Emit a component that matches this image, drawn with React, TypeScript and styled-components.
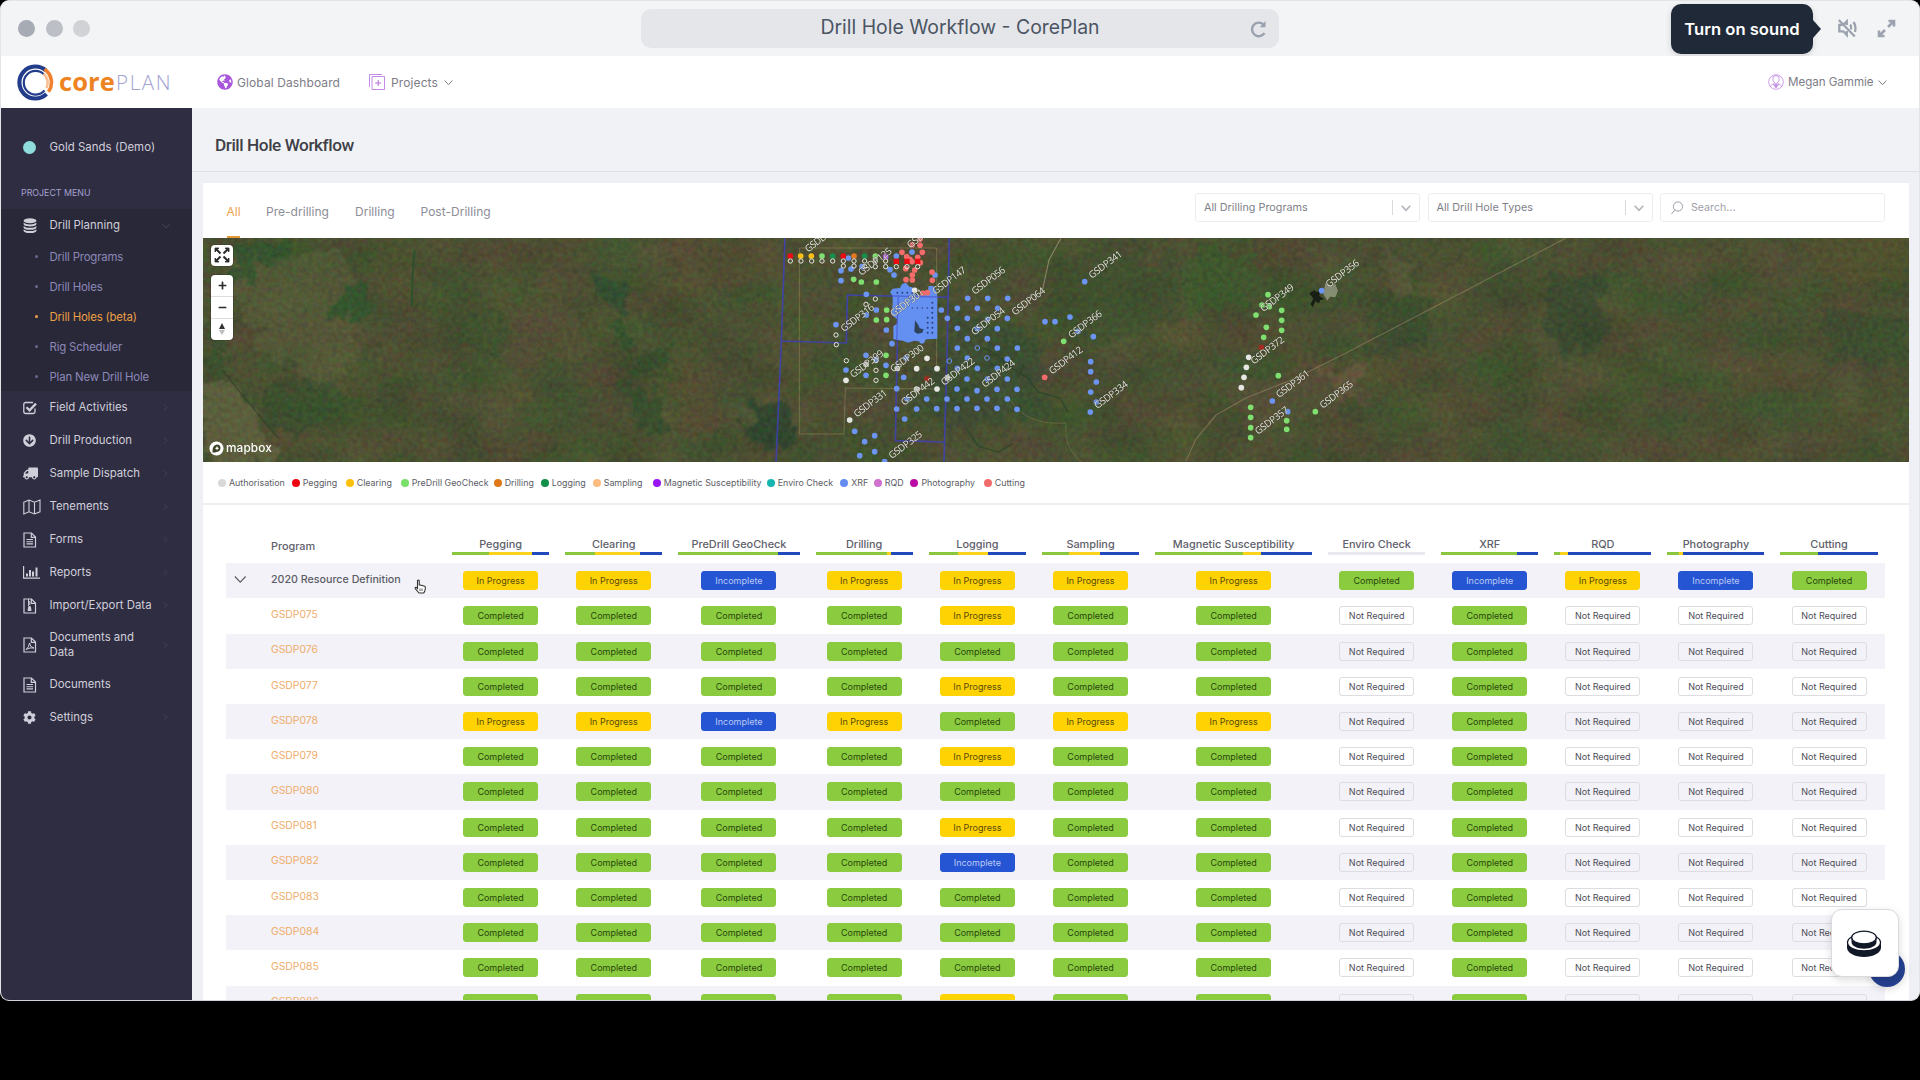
import React from 'react';
import styled, { createGlobalStyle, css } from 'styled-components';
import { FaArrowCircleDown, FaTruck, FaCog, FaGlobeAmericas, FaPlus, FaMinus } from 'react-icons/fa';

const Global = createGlobalStyle`
  html, body { margin: 0; background: #000; overflow: hidden; }
  * { box-sizing: border-box; }
  body { font-family: Inter, "Liberation Sans", sans-serif; color: #4a4a55; }
  svg { display: block; flex: none; }
`;

const Window = styled.div`
  width: 1920px; height: 1001px; border-radius: 9px; overflow: hidden; background: #f2f3f5;
  display: flex; flex-direction: column; position: relative; border: 1px solid #e2e4e8; border-bottom-color: #cfd2d8;
`;
const Chrome = styled.div`
  height: 55px; flex: none; display: grid; grid-template-columns: 640px 638px 1fr; background: #f3f4f6;
`;
const Lights = styled.div`display: flex; align-items: center; gap: 10.6px; padding-left: 17px;`;
const Light = styled.span<{ c: string }>`width: 17px; height: 17px; border-radius: 50%; background: ${p => p.c};`;
const Address = styled.div`
  height: 39px; margin-top: 8px; background: #e5e6ea; border-radius: 10px; display: grid;
  grid-template-columns: 42px 1fr 42px; align-items: center; justify-items: center; color: #9aa1ae;
`;
const AddressText = styled.span`font-size: 19.4px; color: #4b5563; white-space: nowrap; line-height: 24px; margin-top: -4px;`;
const ChromeTools = styled.div`display: flex; align-items: center; padding-left: 392px; color: #9ca3af;`;
const SoundTip = styled.div`
  width: 142px; height: 50px; background: #1f2937; color: #fff; border-radius: 10px; font-weight: 600; font-size: 16.6px;
  display: flex; align-items: center; justify-content: center; white-space: nowrap; box-shadow: 0 2px 6px rgba(0,0,0,.15);
`;
const TipArrow = styled.div`width: 0; height: 0; border: 9px solid transparent; border-left: 8px solid #1f2937; border-right: 0; margin-right: 16px;`;
const Expand = styled.div`margin-left: 19px;`;

const Header = styled.header`
  height: 52px; flex: none; background: #fff; display: flex; align-items: center; padding: 0 32px 0 16px; color: #7d7d88; font-size: 12px;
`;
const Logo = styled.div`display: flex; align-items: center; width: 200px; line-height: 30px;`;
const Core = styled.span`font-family: "Open Sans", sans-serif; font-weight: 700; font-size: 25.5px; color: #ee8322; margin-left: 5px; letter-spacing: .1px; margin-top: -3px;`;
const Plan = styled.span`font-weight: 300; font-family: "Open Sans", sans-serif; font-size: 20.5px; color: #a3a3d0; letter-spacing: 1.7px; margin: 0 0 0 1px;`;
const NavItem = styled.div<{ gap?: number; ml?: number }>`
  display: flex; align-items: center; gap: ${p => p.gap ?? 4}px; margin-left: ${p => p.ml ?? 0}px; letter-spacing: .1px; white-space: nowrap;
`;
const User = styled(NavItem)`margin-left: auto; letter-spacing: -.05px; font-size: 11.6px;`;

const Body = styled.div`flex: 1; display: grid; grid-template-columns: 191px 1fr; min-height: 0; overflow: hidden;`;
const Sidebar = styled.nav`background: #2f2d42; color: #cfcfda; font-size: 11.4px; display: flex; flex-direction: column; padding-top: 16px;`;
const Project = styled.div`height: 46px; display: flex; align-items: center; padding-left: 22px; gap: 13.5px; letter-spacing: .05px;`;
const ProjectDot = styled.span`width: 13px; height: 13px; border-radius: 50%; background: #8edddc;`;
const MenuTitle = styled.div`height: 39px; padding: 17px 0 0 20px; font-size: 8.8px; line-height: 12px; color: #a5a2cf; letter-spacing: .02px;`;
const OpenGroup = styled.div`background: #292839;`;
const Item = styled.div<{ tall?: boolean }>`
  height: ${p => (p.tall ? 45.6 : 33)}px; padding: 0 22px 0 22px; display: grid; grid-template-columns: 26.5px 1fr 8px; align-items: center;
  line-height: 15.6px; letter-spacing: -.01px; & > svg:last-child { color: #4c4a66; }
`;
const ItemText = styled.span<{ wrap?: boolean }>`width: ${p => (p.wrap ? '96px' : 'auto')}; white-space: ${p => (p.wrap ? 'normal' : 'nowrap')};`;
const Sub = styled.div<{ on?: boolean }>`
  height: 29.9px; display: flex; align-items: center; padding-left: 33.5px; gap: 12px; letter-spacing: -.17px; color: ${p => (p.on ? '#eea044' : '#8c89b8')};
  &::before { content: ''; width: 3px; height: 3px; border-radius: 50%; background: ${p => (p.on ? '#eea044' : '#6a688e')}; }
`;

const Main = styled.main`background: #eff0f5; min-width: 0; overflow: hidden;`;
const TitleBar = styled.div`
  height: 64px; border-bottom: 1px solid #dfe0e6; padding: 26px 0 0 23px; font: 500 17.2px/22px Roboto, sans-serif; color: #3f4047; letter-spacing: -.44px; background: #f1f2f6;
`;
const Card = styled.section`margin: 11px 0 0 11px; background: #fff; height: 900px; width: 1706px;`;
const Toolbar = styled.div`height: 54.5px; display: flex; align-items: stretch; padding: 0 24px 0 23.5px;`;
const Tab = styled.div<{ on?: boolean; w: number }>`
  width: ${p => p.w}px; margin-right: 26px; line-height: 58px; height: 54.5px; font-size: 12px; letter-spacing: .03px; white-space: nowrap; color: ${p => (p.on ? '#f0a04a' : '#8d8d97')};
  ${p => p.on && css`border-bottom: 2px solid #e59a33;`}
`;
const Filters = styled.div`margin: 10px 0 0 auto; display: flex; gap: 7.5px;`;
const Field = styled.div`
  width: 225px; height: 29px; border: 1px solid #ececf2; border-radius: 3px; display: flex; align-items: center; padding-left: 8px; font-size: 10.8px; color: #7f7f89; letter-spacing: .02px;
`;
const Caret = styled.div`margin-left: auto; height: 15px; width: 27px; border-left: 1px solid #d9d9e0; display: flex; align-items: center; justify-content: center; color: #b4b4bd;`;
const SearchText = styled.span`margin-left: 7px; color: #a0a0aa; font-size: 10.6px;`;

const MapBox = styled.div`height: 224.5px; position: relative; overflow: hidden; background: #484f31;`;
const MapCtl = styled.div<{ top: number }>`
  position: absolute; left: 8px; top: ${p => p.top}px; width: 22px; background: #fff; border-radius: 4px; box-shadow: 0 0 0 1px rgba(0,0,0,.12); color: #2b2b2b;
`;
const CtlBtn = styled.div`height: 21.7px; display: flex; align-items: center; justify-content: center; & + & { border-top: 1px solid #ddd; }`;
const Attribution = styled.div`
  position: absolute; left: 6px; bottom: 6px; display: flex; align-items: center; gap: 2px; color: #fff; font-weight: 500; font-size: 11.8px; letter-spacing: .1px; line-height: 15px;
`;
const MapWord = styled.span`margin-top: -1px;`;
const Legend = styled.div`
  height: 42.5px; border-bottom: 2px solid #efeff2; padding: 1px 0 0 15px; display: grid; align-items: center; white-space: nowrap; font-size: 8.9px; color: #5c5c66;
  grid-template-columns: 73.7px 54px 55px 93px 47px 52px 60px 114px 73.5px 33.5px 36.7px 73.3px 60px;
`;
const LegendItem = styled.span<{ c: string }>`
  display: flex; align-items: center; gap: 3px; &::before { content: ''; width: 8px; height: 8px; border-radius: 50%; background: ${p => p.c}; }
`;

const cols = '217.6px 113.2px 113.2px 137.2px 113.2px 113.2px 113.2px 173px 113.1px 113.1px 113.1px 113.1px 113.1px';
const Table = styled.div`padding: 26px 0 0 23.4px;`;
const Head = styled.div`display: grid; grid-template-columns: ${cols}; height: 32.8px; font-size: 10.9px; font-weight: 500; color: #60606b;`;
const ProgramHead = styled.div`padding: 8.5px 0 0 44.5px; line-height: 15px;`;
const HeadCell = styled.div`padding: 6px 8px 0; text-align: center; line-height: 14px; white-space: nowrap; letter-spacing: -.02px;`;
const Meter = styled.div`height: 3px; margin-top: 1px; display: flex; background: #e9e9f1;`;
const Seg = styled.i<{ c: string; w: number }>`flex: none; width: ${p => p.w}%; background: ${p => p.c};`;
const Row = styled.div<{ alt: boolean }>`
  display: grid; grid-template-columns: ${cols}; height: 35.2px; width: 1659px; background: ${p => (p.alt ? '#f2f2f8' : '#fff')};
`;
const Name = styled.div<{ group?: boolean }>`
  display: flex; align-items: center; height: 32.4px; padding-left: ${p => (p.group ? 8 : 44.5)}px; gap: 24px; white-space: nowrap;
  font-size: ${p => (p.group ? 10.7 : 10.4)}px; font-weight: ${p => (p.group ? 500 : 400)}; color: ${p => (p.group ? '#5c5c66' : '#f0ad6c')};
`;
const Cell = styled.div`padding-top: 8px; display: flex; justify-content: center; align-items: flex-start;`;
const tones: Record<string, string> = {
  C: 'background:#8bcb3f;color:#28480c;border-color:#8bcb3f;',
  P: 'background:#ffd303;color:#574a07;border-color:#ffd303;',
  I: 'background:#2655d3;color:#b9c9f6;border-color:#2655d3;',
  N: 'background:transparent;color:#4d4d57;border-color:#dcdce1;',
};
const Badge = styled.span<{ tone: string }>`
  width: 75px; height: 19px; border: 1px solid; border-radius: 3px; text-align: center; font-size: 9px; line-height: 17px; white-space: nowrap; ${p => tones[p.tone]}
`;

const Pointer = styled.div`position: absolute; left: 413px; top: 578px;`;
const Chat = styled.div`position: absolute; left: 1868px; top: 949.5px; width: 36px; height: 36px; border-radius: 50%; background: #25408f; box-shadow: 0 2px 8px rgba(0,0,0,.15);`;
const Widget = styled.div`
  position: absolute; left: 1829.5px; top: 908px; width: 68px; height: 68px; background: #fff; border-radius: 11px; border: 1px solid #d9dbe0;
  display: flex; align-items: center; justify-content: center; box-shadow: 0 3px 8px rgba(0,0,0,.14); padding: 2px 2px 0 0;
`;

const Chevron = ({ w = 9, dir = 'down', sw = 1.1 }: { w?: number; dir?: string; sw?: number }) => (
  <svg width={w} height={w} viewBox="0 0 10 10" fill="none" stroke="currentColor" strokeWidth={sw}>
    <path d={dir === 'down' ? 'M.7 2.8 5 7.4 9.3 2.8' : 'M3 1l4 4-4 4'} />
  </svg>
);

const CheckBoxIcon = () => (
  <svg width="14" height="14" viewBox="0 0 14 14" fill="none" stroke="currentColor">
    <path d="M12 7.5v3.2a1.8 1.8 0 0 1-1.8 1.8H2.6A1.8 1.8 0 0 1 .8 10.700V3.300A1.800 1.800 0 0 1 2.600 1.500h7.400" strokeWidth="1.300" />
    <path d="M3.500 6.300l3 3 6.500-6.700" strokeWidth="2.300" />
  </svg>
);
const StackIcon = () => (
  <svg width="14" height="16" viewBox="0 0 14 16" fill="currentColor">
    <ellipse cx="7" cy="2.800" rx="6.400" ry="2.500" />
    {[0, 3.3, 6.6].map(y => <path key={y} transform={`translate(0 ${y})`} d="M.6 4.600c1.200 1.300 3.500 1.800 6.400 1.800s5.200-.5 6.400-1.800v1.500c0 1.400-2.800 2.400-6.400 2.400S.6 7.500.6 6.100z" />)}
  </svg>
);
const ReportIcon = () => (
  <svg width="17" height="13" viewBox="0 0 17 13" fill="currentColor">
    <path d="M0 0h1.200v11.500H17v1.200H0zM3 7.500h2v3H3zM6 4h2v6.500H6zM9 5.500h2v5H9zM12.500 1.500h2v9h-2z" />
  </svg>
);
const FlippedTruck = styled(FaTruck)`transform: scaleX(-1);`;

/* Thin-outlined document sheet; the mark inside varies by document type. */
const Sheet = ({ mark }: { mark: React.ReactNode }) => (
  <svg width="14" height="16" viewBox="0 0 14 16" fill="none" stroke="currentColor" strokeWidth="1.2">
    <path d="M1 1h7.500l4 4v10H1zM8.300 1v4.300h4.200" />{mark}
  </svg>
);
const linesMark = <path d="M3.500 7.500h6.500M3.500 9.700h6.500M3.500 11.900h6.500" strokeWidth="1.100" />;
const zipMark = <path d="M5.500 1v7M6.800 3v4M5.800 8.500l1.500 0 .8 4H5z" fill="currentColor" strokeWidth="1" />;
const pdfMark = <path d="M3 12.500q3-2 3.500-6.500.5 4.500 4.500 5-4-.8-8 1.500z" strokeWidth="1" />;
const FoldedMap = () => (
  <svg width="18" height="16" viewBox="0 0 18 16" fill="none" stroke="currentColor" strokeWidth="1.1">
    <path d="M.8 3.200L6 1l5.500 2.200L17 1v11.800L11.500 15 6 12.800.8 15zM6 1v11.800M11.500 3.200V15" />
  </svg>
);

const menu: [string, React.ReactNode, boolean, boolean?][] = [
  ['Field Activities', <CheckBoxIcon />, true],
  ['Drill Production', <FaArrowCircleDown size={13} />, true],
  ['Sample Dispatch', <FlippedTruck size={15} />, true],
  ['Tenements', <FoldedMap />, true],
  ['Forms', <Sheet mark={linesMark} />, true],
  ['Reports', <ReportIcon />, true],
  ['Import/Export Data', <Sheet mark={zipMark} />, true],
  ['Documents and Data', <Sheet mark={pdfMark} />, true, true],
  ['Documents', <Sheet mark={linesMark} />, false],
  ['Settings', <FaCog size={13} />, true],
];

const legend: [string, string][] = [
  ['Authorisation', '#d8d8d8'], ['Pegging', '#ec0510'], ['Clearing', '#fcbf0a'], ['PreDrill GeoCheck', '#78e068'], ['Drilling', '#e07818'],
  ['Logging', '#12904a'], ['Sampling', '#fdbb80'], ['Magnetic Susceptibility', '#9a15f5'], ['Enviro Check', '#15b5b0'], ['XRF', '#648cf0'],
  ['RQD', '#cf72cf'], ['Photography', '#bb0aa5'], ['Cutting', '#f26c6c'],
];

const headers: [string, number, number][] = [
  ['Pegging', 38, 44], ['Clearing', 30.5, 47], ['PreDrill GeoCheck', 82, 0], ['Drilling', 74, 4], ['Logging', 30, 31], ['Sampling', 28.3, 31.2],
  ['Magnetic Susceptibility', 55.7, 11.8], ['Enviro Check', 0, 0], ['XRF', 78, 0], ['RQD', 6, 8], ['Photography', 11.5, 5], ['Cutting', 39, 0],
];

const rows: [string, string][] = [
  ['2020 Resource Definition', 'PPIPPPPCIPIC'], ['GSDP075', 'CCCCPCCNCNNN'], ['GSDP076', 'CCCCCCCNCNNN'], ['GSDP077', 'CCCCPCCNCNNN'],
  ['GSDP078', 'PPIPCPPNCNNN'], ['GSDP079', 'CCCCPCCNCNNN'], ['GSDP080', 'CCCCCCCNCNNN'], ['GSDP081', 'CCCCPCCNCNNN'], ['GSDP082', 'CCCCICCNCNNN'],
  ['GSDP083', 'CCCCCCCNCNNN'], ['GSDP084', 'CCCCCCCNCNNN'], ['GSDP085', 'CCCCCCCNCNNN'], ['GSDP086', 'CCCCPCCNCNNN'],
];
const words: Record<string, string> = { C: 'Completed', P: 'In Progress', I: 'Incomplete', N: 'Not Required' };

const B = '#6c94f2', G = '#7fe070', W = '#e6e6e2', R = '#ee0a12', K = '#f26c6c';
const dots: [string, number[]][] = [
  [B, [325,84, 469,78, 516,66, 303,122, 333,117, 303,152, 366,110, 450,119, 462,135, 585,135, 379,193, 409,240, 379,255, 288,284, 439,300, 456,341,
    604,240, 622,265, 546,332, 683,205, 743,205, 803,205, 652,235, 712,235, 773,235, 682,265, 743,268, 802,265, 652,295, 712,296, 772,296, 682,326, 742,326,
    652,354, 772,354, 832,354, 682,384, 802,387, 652,415, 712,415, 772,415, 681,447, 742,447, 802,447, 651,477, 711,482, 771,478, 831,478, 681,507, 741,507, 802,507,
    651,536, 711,535, 771,535, 831,538, 621,507, 590,536, 560,507, 530,537, 501,507, 470,537, 470,476, 491,442, 498,384, 378,376, 408,388, 438,406, 378,436, 318,420,
    494,567, 344,604, 404,617, 374,635, 404,665, 359,677, 434,695, 1034,155, 915,275, 945,275, 990,261, 1014,304, 1060,320, 1052,395, 1052,425, 1069,456, 1052,486, 1069,516, 1051,546]],
  [G, [246,78, 406,78, 341,148, 364,156, 409,156, 440,240, 409,270, 440,269, 438,376, 438,436, 971,334]],
  [W, [524,181, 561,385, 530,416, 591,416, 530,477, 591,477, 318,451, 329,570, 472,415, 622,443, 378,403]],
  ['#fbc012', [182,78, 214,78]], [R, [151,78, 310,78]], ['#15904a', [278,78, 374,78]], ['#e07a20', [342,78]], ['#b05cf0', [437,80]], ['#a52a20', [561,447]],
  [K, [540,28, 540,46, 517,44, 486,67, 547,67, 500,80, 533,82, 516,95, 541,98, 510,88, 497,116, 524,120, 517,135, 498,149, 517,150, 576,126, 577,151, 914,442, 548,189, 562,188]],
];
const rings = [151,93, 183,93, 215,93, 246,93, 278,93, 310,93, 342,93, 374,93, 406,93, 437,93, 310,108, 342,108, 374,110, 406,110, 437,110, 469,110, 501,110, 533,110, 406,207, 378,223, 288,315, 289,344, 319,392, 408,392, 408,421, 408,451];
const east: [string, number[]][] = [
  [G, [264,194, 246,225, 268,230, 228,255, 305,241, 305,271, 305,301, 259,292, 251,322, 295,437, 212,532, 212,562, 212,593, 212,623, 320,572, 320,598, 406,545]],
  [B, [425,182, 277,513, 323,545]], [W, [206,382, 199,412, 192,442, 184,473]], ['#a52a20', [244,352]],
];
const labels: [string, number, number][] = [
  ['GSDD001', 206, 68], ['GSDP125', 366, 138], ['GSDP151', 512, 56], ['GSDP147', 588, 195], ['GSDP056', 706, 195], ['GSDP064', 826, 257], ['GSDP341', 1057, 147], ['GSDP316', 313, 307],
  ['GSDP301', 462, 262], ['GSDP054', 705, 317], ['GSDP366', 996, 326], ['GSDP399', 341, 445], ['GSDP300', 462, 428], ['GSDP422', 614, 468], ['GSDP424', 736, 474],
  ['GSDP412', 938, 434], ['GSDP442', 494, 528], ['GSDP331', 352, 563], ['GSDP334', 1074, 538], ['GSDP325', 457, 688],
];
const eastLabels: [string, number, number][] = [['GSDP356', 448, 174], ['GSDP349', 252, 247], ['GSDP372', 223, 404], ['GSDP361', 299, 505], ['GSDP357', 236, 615], ['GSDP365', 430, 537]];

const pairs = (a: number[]) => a.filter((_, i) => i % 2 === 0).map((x, i) => [x, a[i * 2 + 1]]);
const Points = ({ sets }: { sets: [string, number[]][] }) => (
  <>{sets.map(([c, a]) => pairs(a).map(([x, y], i) => <circle key={c + i} cx={x} cy={y} r="8.500" fill={c} />))}</>
);
const MapLabel = styled.text`font: 29.5px "Noto Sans", "Open Sans", sans-serif; fill: #deded6; paint-order: stroke; stroke: rgba(40,45,28,.4); stroke-width: 3px;`;
const Labels = ({ list }: { list: [string, number, number][] }) => (
  <>{list.map(([t, x, y]) => <MapLabel key={t} transform={`translate(${x - 2} ${y}) rotate(-37)`} textLength={118}>{t}</MapLabel>)}</>
);

const Satellite = () => (
  <svg width="1706" height="225" viewBox="0 0 1706 225">
    <defs>
      <filter id="land" x="0" y="0" width="100%" height="100%" colorInterpolationFilters="sRGB">
        <feTurbulence type="fractalNoise" baseFrequency=".018 .026" numOctaves="6" seed="23" />
        <feColorMatrix values=".17 0 0 0 .205  0 .1 0 0 .262  .06 0 .04 0 .145  0 0 0 0 1" />
      </filter>
      <filter id="grain" x="0" y="0" width="100%" height="100%" colorInterpolationFilters="sRGB">
        <feTurbulence type="fractalNoise" baseFrequency=".2" numOctaves="3" seed="4" />
        <feColorMatrix values=".8 0 0 0 -.1  0 .8 0 0 -.07  0 0 .6 0 -.1  0 0 0 0 .16" />
      </filter>
      <filter id="edge" x="-20%" y="-20%" width="140%" height="140%">
        <feTurbulence type="fractalNoise" baseFrequency=".05" numOctaves="5" seed="8" />
        <feDisplacementMap in="SourceGraphic" scale="42" xChannelSelector="R" yChannelSelector="G" /><feGaussianBlur stdDeviation="1.2" />
      </filter>
    </defs>
    <rect width="1706" height="225" fill="#484f31" />
    <rect width="1706" height="225" filter="url(#land)" />
    <g filter="url(#edge)">
      <path d="M30 20L145 10 160 90 130 160 60 110 35 70z" fill="#62633f" opacity=".45" />
      <path d="M0 145l28 5 45 60-5 15H0z" fill="#6b6846" opacity=".7" />
      <path d="M45 5l25-5 20 20-35 10-20 15-15-5z" fill="#2b552e" opacity=".7" />
      <path d="M130 60l35-16 5 25-15 18-25-10z" fill="#28562d" opacity=".75" />
      <path d="M0 90l20 15 10 30-25-5zM60 145l75-5 15 35-60 20-30-15z" fill="#2c502d" opacity=".5" />
      <path d="M265 75l40-3 15 30-45 15-20-15z" fill="#2f532c" opacity=".5" />
      <path d="M300 60l70 10 20 45-50 15-35-25z" fill="#5f4e39" opacity=".45" />
      <path d="M385 33l30 5 15 38-25-3z" fill="#284d31" opacity=".75" />
      <path d="M410 90l20-3 5 20-20 5z" fill="#25512b" opacity=".65" />
      <path d="M422 135l20-22 30 0 0 12-40 12-10 24zM420 160l35-5 5 40-30-5z" fill="#284d2d" opacity=".65" />
      <path d="M470 0l110 0 0 35-60 20-40-20z" fill="#614e39" opacity=".4" />
      <path d="M470 135l45 20 0 55-35-5z" fill="#5e4b3a" opacity=".4" />
      <path d="M547 168l45-5 0 40-40 8z" fill="#24402b" opacity=".75" />
      <path d="M750 80l85 10 5 90-75 10-60-20z" fill="#2f4b30" opacity=".45" />
      <path d="M850 10l120 10 10 60-90 30-40-30z" fill="#364d2c" opacity=".45" />
      <path d="M975 15l75 0 0 50-65 10z" fill="#335f2b" opacity=".5" />
      <path d="M1020 150l80-10 50-20 20 40-110 35z" fill="#604e3b" opacity=".5" />
      <path d="M1165 50l65 10 0 40-60 20z" fill="#2c4a2a" opacity=".45" />
      <path d="M1175 20l45 5-25 40z" fill="#666246" opacity=".45" />
      <path d="M1120 125l40 10-10 30-25-10z" fill="#776147" opacity=".45" />
      <path d="M1340 30l60 10 0 70-50 10z" fill="#23412a" opacity=".45" />
      <path d="M1600 0l106 0 0 40-70 15z" fill="#56532f" opacity=".6" />
      <path d="M1620 70l86 10 0 50-80-5z" fill="#2c4a2c" opacity=".45" />
    </g>
    <rect width="1706" height="225" filter="url(#grain)" />
    <g fill="none">
      <path d="M212 12q-3 20-3 56" stroke="#24502b" strokeWidth="1.8" opacity=".8" />
      <path d="M20 133l20 25 35 42" stroke="#2a3a24" strokeWidth="1.2" opacity=".6" />
      <path d="M858 0l-12 22-7 32" stroke="#b3a988" strokeWidth="1.1" opacity=".6" />
      <path d="M805 158q15 30 58 27v14q2 13 16 26" stroke="#94855f" opacity=".4" />
      <path d="M983 223l10-22 20-24 30-17 50-20 50-25 115-60 105-55" stroke="#a28f69" strokeWidth="1.200" opacity=".5" />
      <path d="M780 110q15 5 25 18l20 12 10 14 22 6 8 14M815 140l6-14M763 190l12 18 20 6 15-8" stroke="#263f27" strokeWidth="1.600" opacity=".6" />
    </g>
    <g transform="translate(537 -8) scale(.33333)">
      <g fill="none">
        <path d="M178 54H590V420M178 54V612H312L316 474 590 477" stroke="#b6a567" strokeWidth="2.500" opacity=".45" />
        <path d="M135 20L124 333 108 700M628 20L622 333 612 700M124 333L319 339 322 195 626 202M475 195L466 632 614 636" stroke="#3f40bd" strokeWidth="5" opacity=".8" />
      </g>
      <path d="M450 186l8-10 22-2 6-12 12-4 10 12 10 2 2 14 10 10 32-2 4-26 14 0 8 14 4 16 0 128-32 2-12 8-24-4-20 6-16-6-28-4 0-40 10-6 2-14-18-14 4-30 0-26z" fill="#6490f2" />
      <path d="M475 195L470 330M455 198L592 201" stroke="#4a55cf" strokeWidth="4" opacity=".7" />
      <g fill="#29407a">
        {[0, 1, 2, 3].map(i => <circle key={i} cx={472 + i * 15} cy="188" r="3" />)}
        {[0, 1, 2, 3, 4, 5].map(i => <circle key={'b' + i} cx={502 + i * 15} cy={i < 1 ? 220 : 234} r="2.200" />)}
        {[0, 1, 2, 3, 4, 5, 6].map(i => <circle key={'c' + i} cx="577" cy={218 + i * 15} r="3" />)}
        {[0, 1, 2, 3].map(i => <circle key={'d' + i} cx="563" cy={263 + i * 15} r="3" />)}
        <path d="M523 305l2-34 10 14 4 10 12 3-4 10-14 3z" fill="#2f4258" />
      </g>
      <Points sets={dots} />
      <g fill={R}><path d="M461 86h16v16h-16zM493 86h16v16h-16zM525 86h16v16h-16z" /></g>
      <g fill="none" stroke="#e6e6e2" strokeWidth="3">{pairs(rings).map(([x, y], i) => <circle key={i} cx={x} cy={y} r="6.500" />)}</g>
      <g fill="none" stroke={B} strokeWidth="3"><circle cx="712" cy="354" r="7" /><circle cx="741" cy="384" r="7" /><circle cx="628" cy="393" r="7" /></g>
      <Labels list={labels} />
    </g>
    <g transform="translate(977 -8) scale(.33333)">
      <path d="M436 160l16 6 14-4 8 20-8 20-16-2-8 12-12-20z" fill="#a9ae9a" opacity=".65" />
      <path d="M388 190l16-10 4 6 12-2-2 14 16 10-14 2-2 10-12-6-8 18-6-10 8-16z" fill="#182016" />
      <Points sets={east} />
      <Labels list={eastLabels} />
    </g>
  </svg>
);

export default function App() {
  return (
    <>
      <Global />
      <Window>
        <Chrome>
          <Lights><Light c="#a7abb4" /><Light c="#bcbfc6" /><Light c="#d0d2d6" /></Lights>
          <Address>
            <span />
            <AddressText>Drill Hole Workflow - CorePlan</AddressText>
            <svg width="17" height="18" viewBox="0 0 17 18" fill="none" stroke="currentColor" strokeWidth="2.400">
              <path d="M14.500 13.200A6.800 6.800 0 1 1 13.500 4.500" /><path d="M15.500 1v6.200H9.800z" fill="currentColor" stroke="none" />
            </svg>
          </Address>
          <ChromeTools>
            <SoundTip>Turn on sound</SoundTip><TipArrow />
            <svg width="21" height="19" viewBox="0 0 21 19" fill="none" stroke="currentColor" strokeWidth="2.300">
              <path d="M9.800 6V2.300L6.300 5.800H2.300v6.500h4l3.500 3.700v-4M1.800 1l16 16.500" />
              <path d="M13.200 5.500q1.500 2 .8 5M16.500 3q3 4.500 1.500 10" />
            </svg>
            <Expand>
              <svg width="19" height="19" viewBox="0 0 19 19" fill="none" stroke="currentColor" strokeWidth="2.600">
                <path d="M11.500 2H17v5.500M16.500 2.500l-5.500 5.500M7.500 17H2v-5.500M2.500 16.500L8 11" />
              </svg>
            </Expand>
          </ChromeTools>
        </Chrome>
        <Header>
          <Logo>
            <svg width="37" height="37" viewBox="0 0 37 37" fill="none">
              <path d="M29 6.500A16 16 0 1 0 29.500 30" stroke="#233d8c" strokeWidth="4.200" />
              <path d="M27 10.500A11.800 11.800 0 1 0 27.500 26.500" stroke="#233d8c" strokeWidth="2.200" />
              <path d="M27.500 5.300A16 16 0 0 1 31.500 27.800" stroke="#ee8030" strokeWidth="3.600" />
              <path d="M26.500 9.800A11.800 11.800 0 0 1 29.500 24" stroke="#f8bd92" strokeWidth="2.600" />
            </svg>
            <Core>core</Core><Plan>PLAN</Plan>
          </Logo>
          <NavItem><FaGlobeAmericas size={16} color="#a958dc" />Global Dashboard</NavItem>
          <NavItem gap={6} ml={29}>
            <svg width="16" height="16" viewBox="0 0 16 16" fill="none" stroke="#c58be8">
              <path d="M3 2.500h12.500v13H3zM.5 13V.5H13" /><path d="M9.200 6v6M6.200 9h6" stroke="#b36adf" />
            </svg>
            Projects<Chevron />
          </NavItem>
          <User gap={4.5}>
            <svg width="16" height="16" viewBox="0 0 16 16" fill="none" stroke="#c793e8" strokeWidth=".9">
              <circle cx="8" cy="8" r="7.300" /><path d="M5 2.500q3-1.500 6 0v4q-1.500 3-3 3t-3-3zM2 12.500q1.500-2.500 4.500-3M14 12.500q-1.500-2.500-4.500-3" /><path d="M5.500 10.500h5L8 14z" fill="#c793e8" />
            </svg>
            Megan Gammie<Chevron />
          </User>
        </Header>
        <Body>
          <Sidebar>
            <Project><ProjectDot />Gold Sands (Demo)</Project>
            <MenuTitle>PROJECT MENU</MenuTitle>
            <OpenGroup>
              <Item><StackIcon /><ItemText>Drill Planning</ItemText><Chevron w={8} /></Item>
              <Sub>Drill Programs</Sub><Sub>Drill Holes</Sub><Sub on>Drill Holes (beta)</Sub><Sub>Rig Scheduler</Sub><Sub>Plan New Drill Hole</Sub>
            </OpenGroup>
            {menu.map(([t, icon, arrow, tall]) => (
              <Item key={t} tall={tall}>{icon}<ItemText wrap={tall}>{t}</ItemText>{arrow && <Chevron w={7} dir="right" />}</Item>
            ))}
          </Sidebar>
          <Main>
            <TitleBar>Drill Hole Workflow</TitleBar>
            <Card>
              <Toolbar>
                <Tab on w={13.5}>All</Tab><Tab w={63}>Pre-drilling</Tab><Tab w={39.5}>Drilling</Tab><Tab w={70}>Post-Drilling</Tab>
                <Filters>
                  <Field>All Drilling Programs<Caret><Chevron w={10} sw={1.6} /></Caret></Field>
                  <Field>All Drill Hole Types<Caret><Chevron w={10} sw={1.6} /></Caret></Field>
                  <Field>
                    <svg width="15" height="14" viewBox="0 0 15 14" fill="none" stroke="#9c9ca8"><circle cx="9" cy="5.500" r="4.600" /><path d="M5.700 9L2.500 13" /></svg>
                    <SearchText>Search...</SearchText>
                  </Field>
                </Filters>
              </Toolbar>
              <MapBox>
                <Satellite />
                <MapCtl top={7}>
                  <CtlBtn>
                    <svg width="16" height="16" viewBox="0 0 16 16" fill="currentColor" stroke="currentColor" strokeWidth="2">
                      <path d="M1 1h4L1 5zM15 1v4l-4-4zM1 15v-4l4 4zM15 15h-4l4-4z" strokeWidth=".8" /><path d="M3 3l3.500 3.500M13 3L9.500 6.500M3 13l3.500-3.500M13 13L9.500 9.500" />
                    </svg>
                  </CtlBtn>
                </MapCtl>
                <MapCtl top={37}>
                  <CtlBtn><FaPlus size={9} /></CtlBtn><CtlBtn><FaMinus size={9} /></CtlBtn>
                  <CtlBtn><svg width="8" height="14" viewBox="0 0 8 14"><path d="M4 1l3 6H1z" fill="#333" /><path d="M1 8h6l-3 5z" fill="#bbb" /></svg></CtlBtn>
                </MapCtl>
                <Attribution>
                  <svg width="15" height="15" viewBox="0 0 15 15"><circle cx="7.500" cy="7.500" r="7" fill="#fff" /><path d="M3.500 11.500Q3 4 8 3.500q3.500 0 3.500 3.500T7.500 11q-2 .8-4 .5z" fill="#3c4228" /><path d="M8 5l.7 1.500 1.500.7-1.500.7L8 9.400l-.7-1.500-1.500-.7 1.500-.7z" fill="#fff" /></svg>
                  <MapWord>mapbox</MapWord>
                </Attribution>
              </MapBox>
              <Legend>{legend.map(([t, c]) => <LegendItem key={t} c={c}>{t}</LegendItem>)}</Legend>
              <Table>
                <Head>
                  <ProgramHead>Program</ProgramHead>
                  {headers.map(([t, g, y]) => (
                    <HeadCell key={t}>{t}
                      <Meter>{t !== 'Enviro Check' && <><Seg c="#8bc63f" w={g} /><Seg c="#fbd21c" w={y} /><Seg c="#2148bd" w={100 - g - y} /></>}</Meter>
                    </HeadCell>
                  ))}
                </Head>
                {rows.map(([n, s], i) => (
                  <Row key={n} alt={i % 2 === 0}>
                    <Name group={i === 0}>{i === 0 && <Chevron w={12.5} sw={.9} />}{n}</Name>
                    {s.split('').map((k, j) => <Cell key={j}><Badge tone={k}>{words[k]}</Badge></Cell>)}
                  </Row>
                ))}
              </Table>
            </Card>
          </Main>
        </Body>
        <Pointer>
          <svg width="13" height="15" viewBox="0 0 13 15"><path d="M3.500 1.500q1-1 1.700 0v4.300l5 1.200q1.500.5 1.200 2l-.6 3-1 2H5L1.200 9.500q-.3-1.500 1.300-1l1 1z" fill="#fff" stroke="#333" strokeWidth="1.100" /><path d="M6 9.500v2.500M8 9.500v2.500" stroke="#333" strokeWidth=".8" /></svg>
        </Pointer>
        <Chat />
        <Widget>
          <svg width="36" height="28" viewBox="0 0 36 28">
            <path d="M1 12v5.500C1 23 9 27 18 27s17-4 17-9.500V12z" fill="#111827" />
            <ellipse cx="18" cy="12.500" rx="16.500" ry="8.500" fill="#fff" stroke="#111827" strokeWidth="1.300" />
            <path d="M5.500 8v4c0 4 6 6.700 12.500 6.700S30.500 16 30.500 12V8z" fill="#111827" />
            <ellipse cx="18" cy="7.500" rx="12.300" ry="6.300" fill="#fff" stroke="#111827" strokeWidth="1.300" />
          </svg>
        </Widget>
      </Window>
    </>
  );
}
